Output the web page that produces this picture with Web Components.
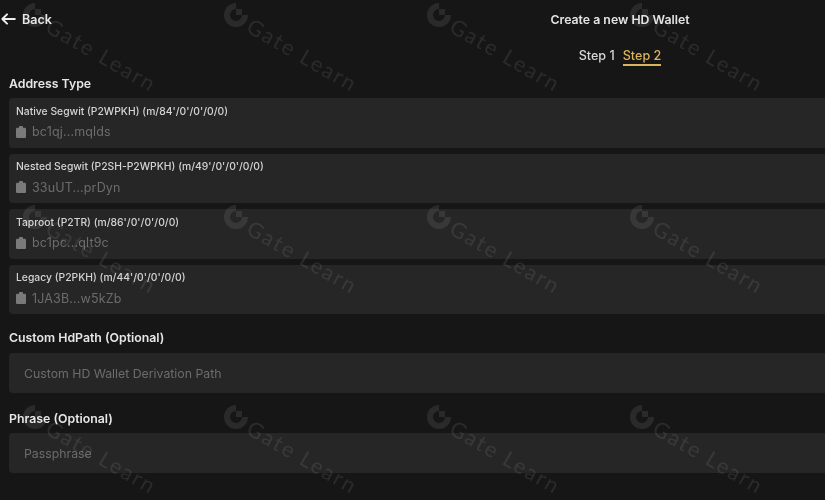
<!DOCTYPE html>
<html>
<head>
<meta charset="utf-8">
<title>Create a new HD Wallet</title>
<style>
html, body { margin: 0; height: 100%; background: #161617; overflow: hidden; }
body { font-family: Inter, "Liberation Sans", sans-serif; }
</style>
</head>
<body>
<wallet-page>
  <top-bar title="Create a new HD Wallet"></top-bar>
  <section-label style="margin-top:6px">Address Type</section-label>
  <div style="display:flex;flex-direction:column;gap:6px;margin-top:6px">
    <address-card path="Native Segwit (P2WPKH) (m/84'/0'/0'/0/0)" address="bc1qj...mqlds"></address-card>
    <address-card path="Nested Segwit (P2SH-P2WPKH) (m/49'/0'/0'/0/0)" address="33uUT...prDyn"></address-card>
    <address-card path="Taproot (P2TR) (m/86'/0'/0'/0/0)" address="bc1pc...qlt9c"></address-card>
    <address-card path="Legacy (P2PKH) (m/44'/0'/0'/0/0)" address="1JA3B...w5kZb"></address-card>
  </div>
  <section-label style="margin-top:16px">Custom HdPath (Optional)</section-label>
  <text-box style="margin-top:7px">Custom HD Wallet Derivation Path</text-box>
  <section-label style="margin-top:18px">Phrase (Optional)</section-label>
  <text-box style="margin-top:6px">Passphrase</text-box>
</wallet-page>
<water-marks></water-marks>

<script>
class WalletPage extends HTMLElement {
    constructor() {
        super();
        this.attachShadow({ mode: "open" });
        this.shadowRoot.innerHTML = `
            <style>
            :host {
                display: flex;
                flex-direction: column;
                box-sizing: border-box;
                padding-left: 9px;
                height: 100vh;
                overflow: hidden;
                color: #e8e8e8;
                filter: blur(0.35px);
            }
            </style>
            <slot></slot>
        `;
    }
}

class TopBar extends HTMLElement {
    constructor() {
        super();
        this.attachShadow({ mode: "open" });
        const title = this.getAttribute("title");
        this.removeAttribute("title");
        this.shadowRoot.innerHTML = `
            <style>
            :host { display: block; height: 70px; flex: none; margin-left: -9px; }
            /* the window only shows the left part of a wider page, so the centre column sits at 620px */
            .row, .steps-row { display: grid; grid-template-columns: 415px 410px; align-items: center; }
            .row { height: 38px; }
            .back { display: flex; align-items: center; gap: 6px; padding-left: 1px; font-size: 12.5px; font-weight: 600; color: #e6e6e6; }
            .back svg { display: block; }
            .title { justify-self: center; font-size: 12.3px; font-weight: 600; color: #e4e4e4; white-space: nowrap; }
            .steps { grid-column: 2; display: flex; justify-content: center; gap: 8px; margin-top: 10px; font-size: 12.6px; font-weight: 500; color: #d6d6d6; }
            .step { line-height: 16px; }
            .active { color: #d9b45b; border-bottom: 2px solid #d9b45b; line-height: 16px; }
            </style>
            <div class="row">
                <div class="back">
                    <svg width="15" height="12" viewBox="0 0 15 12" fill="none" stroke="#eee" stroke-width="2" stroke-linecap="round" stroke-linejoin="round"><path d="M1.400 6h12.400M6 1.400 1.400 6 6 10.600"/></svg>
                    <span>Back</span>
                </div>
                <div class="title">${title}</div>
            </div>
            <div class="steps-row">
                <div class="steps"><span class="step">Step 1</span><span class="active">Step 2</span></div>
            </div>
        `;
    }
}

class SectionLabel extends HTMLElement {
    constructor() {
        super();
        this.attachShadow({ mode: "open" });
        this.shadowRoot.innerHTML = `
            <style>
            :host { display: block; flex: none; font-size: 12.3px; line-height: 16px; font-weight: 600; color: #e6e6e6; }
            </style>
            <slot></slot>
        `;
    }
}

class AddressCard extends HTMLElement {
    constructor() {
        super();
        this.attachShadow({ mode: "open" });
        this.shadowRoot.innerHTML = `
            <style>
            :host {
                display: flex;
                flex-direction: column;
                height: 49.6px;
                box-sizing: border-box;
                padding: 5.5px 7px 0;
                background: #262627;
                border-radius: 4px 0 0 4px;
            }
            .path { font-size: 10.35px; line-height: 14px; font-weight: 500; color: #d4d4d4; white-space: nowrap; }
            .address { display: flex; align-items: center; gap: 6px; margin-top: 6.5px; font-size: 12.5px; line-height: 15px; color: #6c6c6d; letter-spacing: .15px; }
            svg { display: block; flex: none; }
            </style>
            <div class="path">${this.getAttribute("path")}</div>
            <div class="address">
                <svg width="10" height="12" viewBox="0 0 10 12"><path fill="#7a7a7b" d="M3 1.800V1c0-.5.4-1 1-1h2c.6 0 1 .5 1 1v.8h1.700c.7 0 1.300.6 1.300 1.300v7.600c0 .7-.6 1.300-1.300 1.300H1.300C.6 12 0 11.400 0 10.700V3.100c0-.7.6-1.300 1.300-1.300z"/></svg>
                <span>${this.getAttribute("address")}</span>
            </div>
        `;
    }
}

class TextBox extends HTMLElement {
    constructor() {
        super();
        this.attachShadow({ mode: "open" });
        this.shadowRoot.innerHTML = `
            <style>
            :host {
                display: flex;
                align-items: center;
                flex: none;
                height: 40px;
                padding: 0 15px;
                background: #262627;
                border-radius: 4px 0 0 4px;
                font-size: 12.3px;
                color: #6c6c6d;
            }
            </style>
            <slot></slot>
        `;
    }
}

// Repeating "Gate Learn" stamp laid over the whole frame
class WaterMarks extends HTMLElement {
    constructor() {
        super();
        this.attachShadow({ mode: "open" });
        const stamps = [];
        for (const y of [3, 205, 405]) {
            for (const x of [23, 224, 427, 630]) {
                stamps.push(`
                    <div class="stamp" style="left:${x}px;top:${y}px">
                        <svg width="24" height="24" viewBox="0 0 24 24"><path fill="#fff" d="M12 0a12 12 0 1 0 12 12h-6a6 6 0 1 1-6-6z M12 6v6h6V6z"/></svg>
                        <span>Gate Learn</span>
                    </div>`);
            }
        }
        this.shadowRoot.innerHTML = `
            <style>
            :host { position: fixed; inset: 0; overflow: hidden; pointer-events: none; }
            .stamp { position: absolute; width: 24px; height: 24px; opacity: .085; filter: blur(0.4px); }
            svg { display: block; }
            span {
                position: absolute;
                left: 25px;
                top: 16px;
                font: 400 21.5px/10px Lato, "Liberation Sans", sans-serif;
                letter-spacing: 2.1px;
                color: #fff;
                white-space: nowrap;
                transform: rotate(30deg);
                transform-origin: 0 50%;
            }
            </style>
            ${stamps.join("")}
        `;
    }
}

customElements.define("wallet-page", WalletPage);
customElements.define("top-bar", TopBar);
customElements.define("section-label", SectionLabel);
customElements.define("address-card", AddressCard);
customElements.define("text-box", TextBox);
customElements.define("water-marks", WaterMarks);
</script>
</body>
</html>
